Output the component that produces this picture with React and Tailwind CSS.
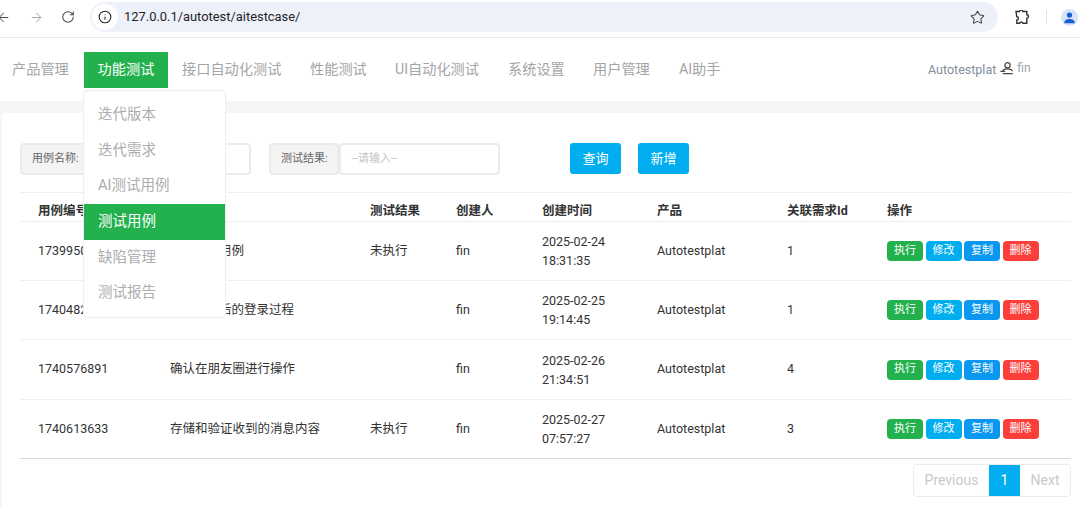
import { ArrowLeft, ArrowRight, RotateCw, Info, Star } from "lucide-react";

const font = "font-['Roboto','Noto_Sans_CJK_SC',sans-serif]";

const navItems = ["接口自动化测试", "性能测试", "UI自动化测试", "系统设置", "用户管理", "AI助手"];
const navWidths = ["w-[129px]", "w-[85px]", "w-[113px]", "w-[85px]", "w-[86px]", "w-[70px]"];

const menuItems = ["迭代版本", "迭代需求", "AI测试用例", "测试用例", "缺陷管理", "测试报告"];

const rows = [
  { id: "1739950", name: "", nameTail: "用例", result: "未执行", date: "2025-02-24", time: "18:31:35", req: "1", h: "h-[59px]" },
  { id: "1740482", name: "", nameTail: "后的登录过程", result: "", date: "2025-02-25", time: "19:14:45", req: "1", h: "h-[59px]" },
  { id: "1740576891", name: "确认在朋友圈进行操作", result: "", date: "2025-02-26", time: "21:34:51", req: "4", h: "h-[60px]" },
  { id: "1740613633", name: "存储和验证收到的消息内容", result: "未执行", date: "2025-02-27", time: "07:57:27", req: "3", h: "h-[58px]" },
];

const tableCols = "grid grid-cols-[132px_200px_86px_86px_115px_130px_100px_1fr] pl-[18px]";

function BrowserBar() {
  return (
    <div className="flex h-[38px] items-center border-b border-[#e6e7ea] bg-white pb-[3px]">
      <ArrowLeft size={15} strokeWidth={1.6} className="ml-[-4px] shrink-0 text-[#44474a]" />
      <ArrowRight size={15} strokeWidth={1.6} className="ml-[18px] shrink-0 text-[#a4a6a9]" />
      <RotateCw size={14} strokeWidth={1.8} className="ml-[17px] shrink-0 text-[#44474a]" />
      <div className="ml-[15px] flex h-[30px] w-[908px] shrink-0 items-center rounded-full bg-[#edf1fa]">
        <div className="ml-[2px] flex h-[26px] w-[26px] items-center justify-center rounded-full bg-white">
          <Info size={14} strokeWidth={1.8} className="text-[#222]" />
        </div>
        <span className="ml-[6px] text-[12.9px] text-[#1f2328]">127.0.0.1/autotest/aitestcase/</span>
        <Star size={15} strokeWidth={1.7} className="ml-auto mr-[13px] text-[#44474a]" />
      </div>
      <svg viewBox="0 0 16 14" className="ml-[17px] h-[14px] w-[16px] shrink-0 fill-none stroke-[#333] stroke-[1.4]">
        <path d="M1 1.5h3.6a1.6 1.6 0 0 1 3.2 0h4v3.3a1.7 1.7 0 0 1 0 3.4v5H7.8a1.7 1.7 0 0 0-3.2 0H1.8v-3.2a1.6 1.6 0 0 0 0-3.2z" />
      </svg>
      <div className="ml-[15px] h-[14px] w-px shrink-0 bg-[#d7e1f3]" />
      <div className="ml-[14px] flex h-[17px] w-[17px] shrink-0 items-center justify-center rounded-full bg-[#d5e3fb]">
        <svg viewBox="0 0 16 16" className="h-[13px] w-[13px] fill-[#1a5fd0]">
          <circle cx="8" cy="5" r="3.2" />
          <path d="M1.5 15c0-3.6 2.9-5.2 6.5-5.2s6.5 1.6 6.5 5.2z" />
        </svg>
      </div>
    </div>
  );
}

function NavBar() {
  return (
    <div className="flex h-[63px] items-center bg-white pl-[12px] pt-[1px] text-[14.2px] text-[#a3a5a7]">
      <span className="w-[72px]">产品管理</span>
      <span className="flex h-[36px] w-[84px] items-center justify-center bg-[#23b14d] text-white">功能测试</span>
      {navItems.map((item, i) => (
        <span key={item} className={`${navWidths[i]} ${i === 0 ? "pl-[14px]" : "pl-[13px]"}`}>{item}</span>
      ))}
      <div className="ml-[192px] flex items-center text-[#7f8f9c]">
        <span className="text-[12.5px]">Autotestplat</span>
        <svg viewBox="0 0 16 16" className="ml-[4px] mt-[-3px] h-[15px] w-[15px] fill-none stroke-[#444] stroke-[1.3]">
          <circle cx="8" cy="4.5" r="2.8" />
          <path d="M3 11c0-1.6 2.2-2.6 5-2.6s5 1 5 2.6" />
          <path d="M0.5 11h5M3 13.5h10.5" />
        </svg>
        <span className="ml-[2px] mt-[-4px] text-[12px] text-[#9ba3aa]">fin</span>
      </div>
    </div>
  );
}

function DropMenu() {
  return (
    <div className="absolute left-[83px] top-[90px] z-10 h-[228px] w-[143px] rounded-[4px] border border-[#eceef0] bg-white pt-[6px] text-[14.5px] text-[#abadaf]">
      {menuItems.map((item) => (
        <div
          key={item}
          className={
            item === "测试用例"
              ? "flex h-[36px] items-center bg-[#23b14d] pl-[14px] text-white"
              : "flex h-[35.5px] items-center pl-[14px] pt-[1px]"
          }
        >
          {item}
        </div>
      ))}
    </div>
  );
}

function Filter({ label, labelW, inputW, placeholder }) {
  return (
    <div className="flex h-[32px] text-[11px]">
      <div className={`${labelW} flex items-center rounded-[4px] border-2 border-[#ebebeb] bg-[#f4f4f4] pl-[10px] text-[#666]`}>
        {label}
      </div>
      <div className={`${inputW} flex items-center rounded-[4px] border-2 border-[#ebebeb] bg-white pl-[11px] text-[#c4c4c4]`}>
        {placeholder}
      </div>
    </div>
  );
}

function Actions() {
  const cls = "flex h-[20px] w-[36px] items-center justify-center rounded-[4px] text-[11px] text-white";
  return (
    <div className="flex gap-[2.5px]">
      <span className={`${cls} bg-[#23b14d]`}>执行</span>
      <span className={`${cls} bg-[#00aeef]`}>修改</span>
      <span className={`${cls} bg-[#0a97f0]`}>复制</span>
      <span className={`${cls} bg-[#fb3e3a]`}>删除</span>
    </div>
  );
}

function CaseTable() {
  const head = ["用例编号", "", "测试结果", "创建人", "创建时间", "产品", "关联需求Id", "操作"];
  return (
    <div className="ml-[18px] mr-[9px] mt-[17px] border-b border-[#d9d9d9] text-[12.5px] text-[#333]">
      <div className={`${tableCols} h-[30px] items-center border-y border-[#efefef] pt-[8px] font-bold text-[#333]`}>
        {head.map((h, i) => (
          <span key={i}>{h}</span>
        ))}
      </div>
      {rows.map((row, i) => (
        <div key={row.id} className={`${tableCols} ${row.h} items-center ${i < 3 ? "border-b border-[#efefef]" : ""}`}>
          <span>{row.id}</span>
          <span className={row.name ? "" : "pl-[49px]"}>{row.name || row.nameTail}</span>
          <span>{row.result}</span>
          <span>fin</span>
          <span className="leading-[19px]">
            {row.date}
            <br />
            {row.time}
          </span>
          <span>Autotestplat</span>
          <span>{row.req}</span>
          <Actions />
        </div>
      ))}
    </div>
  );
}

function Pagination() {
  return (
    <div className="mr-[9px] mt-[5px] flex justify-end">
      <div className="flex h-[33px] items-stretch rounded-[3px] border border-[#ececec] text-[14px] text-[#c7c9cb]">
        <span className="flex w-[75px] items-center justify-center">Previous</span>
        <span className="flex w-[31px] items-center justify-center bg-[#00aeef] text-white">1</span>
        <span className="flex w-[50px] items-center justify-center">Next</span>
      </div>
    </div>
  );
}

export default function App() {
  return (
    <div className={`${font} relative h-[507px] w-[1080px] overflow-hidden bg-[#f4f5f7]`}>
      <BrowserBar />
      <NavBar />
      <DropMenu />
      <div className="ml-[2px] mt-[12px] h-[394px] rounded-tl-[4px] bg-white pt-[30px]">
        <div className="flex items-start pl-[18px]">
          <Filter label="用例名称:" labelW="w-[85px]" inputW="w-[146px]" placeholder="" />
          <div className="w-[18px]" />
          <Filter label="测试结果:" labelW="w-[70px]" inputW="w-[161px]" placeholder="--请输入--" />
          <button className="ml-[70px] h-[31px] w-[51px] rounded-[3px] bg-[#00aeef] text-[13px] text-white">查询</button>
          <button className="ml-[17px] h-[31px] w-[51px] rounded-[3px] bg-[#00aeef] text-[13px] text-white">新增</button>
        </div>
        <CaseTable />
        <Pagination />
      </div>
    </div>
  );
}
